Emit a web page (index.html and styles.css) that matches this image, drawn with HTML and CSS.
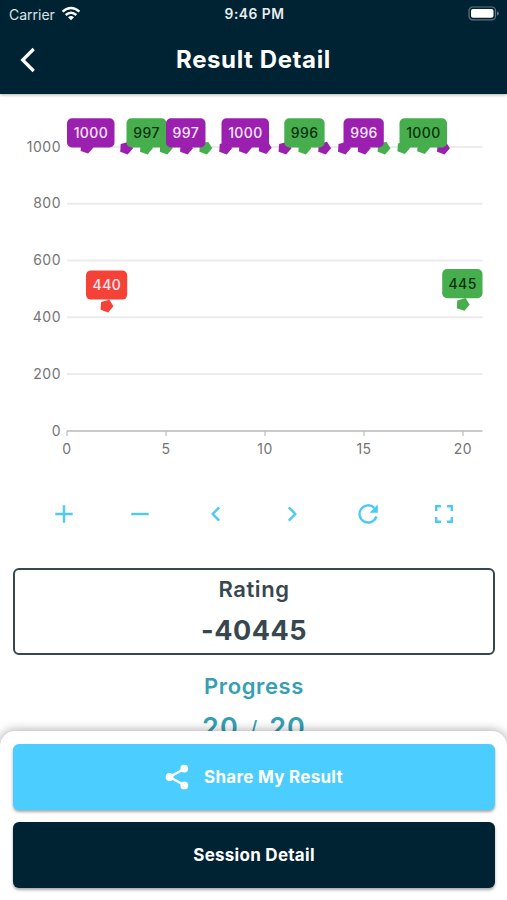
FILE: index.html
```html
<!DOCTYPE html>
<html lang="en">
<head>
<meta charset="utf-8">
<title>Result Detail</title>
<link rel="stylesheet" href="styles.css">
</head>
<body>
<div class="screen">
  <header class="top">
    <div class="status">
      <div class="carrier"><span>Carrier</span>
        <svg width="20" height="15" viewBox="0 0 20 15" fill="none" stroke="#fff" stroke-width="2.5"><path d="M1.6 5.6Q10-1.6 18.4 5.6M4.7 9Q10 4.6 15.3 9"/><path d="M7 11.2Q10 8.8 13 11.2L10 14.2Z" fill="#fff" stroke="none"/></svg>
      </div>
      <span class="time">9:46 PM</span>
      <svg class="battery" width="32" height="16" viewBox="0 0 32 16"><rect x="1" y="1" width="26.5" height="12.8" rx="3.6" fill="none" stroke="#61747e" stroke-width="1.2"/><rect x="3" y="3" width="22.5" height="8.8" rx="2" fill="#fff"/><path d="M29 5.2Q31 6 31 7.5T29 9.8Z" fill="#61747e"/></svg>
    </div>
    <div class="nav">
      <svg class="back" width="18" height="26" viewBox="0 0 18 26" fill="none" stroke="#fff" stroke-width="3.2"><path d="M14.7 2L3.7 13L14.7 24"/></svg>
      <h1>Result Detail</h1>
    </div>
  </header>
  <main class="content">
    <svg class="chart" width="507" height="376" viewBox="0 94 507 376">
      <defs>
        <path id="m" d="M6.7.3L1.3 6.4L-6.2 3.8L-5.7-4L2.6-6.3Z"/>
      </defs>
      <path class="grid" d="M67 147H482.5M67 203.7H482.5M67 260.5H482.5M67 317.3H482.5M67 374H482.5"/>
      <path class="axis" d="M67 431H482.5"/>
      <path class="tick" d="M67 431V436M166 431V436M265 431V436M364 431V436M463 431V436"/>
      <g class="label end">
        <text x="61" y="151.7">1000</text><text x="61" y="208.4">800</text><text x="61" y="265.2">600</text><text x="61" y="322">400</text><text x="61" y="378.7">200</text><text x="61" y="435.7">0</text>
      </g>
      <g class="label mid">
        <text x="67" y="454.3">0</text><text x="166" y="454.3">5</text><text x="265" y="454.3">10</text><text x="364" y="454.3">15</text><text x="463" y="454.3">20</text>
      </g>
      <g class="purple">
        <use href="#m" x="86.8" y="147.2"/><use href="#m" x="126.4" y="148"/><use href="#m" x="186.3" y="148"/><use href="#m" x="225.4" y="148"/><use href="#m" x="245.2" y="147.5"/><use href="#m" x="265" y="147.5"/><use href="#m" x="284.8" y="148"/><use href="#m" x="324.4" y="148"/><use href="#m" x="344.2" y="148"/><use href="#m" x="364" y="148"/><use href="#m" x="443.2" y="148"/>
      </g>
      <g class="green">
        <use href="#m" x="146.2" y="148"/><use href="#m" x="166" y="148"/><use href="#m" x="205.6" y="148"/><use href="#m" x="304.6" y="148"/><use href="#m" x="383.8" y="148"/><use href="#m" x="403.6" y="147.5"/><use href="#m" x="423.4" y="147.5"/><use href="#m" x="463" y="304.4"/>
      </g>
      <use class="red" href="#m" x="106.8" y="306"/>
      <g class="purple">
        <rect x="67" y="118.3" width="47.5" height="29.2" rx="5"/><rect x="221.5" y="118.3" width="47.5" height="29.2" rx="5"/><rect x="343.5" y="118.3" width="40.3" height="29.2" rx="5"/>
      </g>
      <g class="green">
        <rect x="126.5" y="118.3" width="40" height="29.2" rx="5"/><rect x="284.3" y="118.3" width="40.3" height="29.2" rx="5"/><rect x="399.5" y="118.3" width="47.5" height="29.2" rx="5"/><rect x="442.2" y="269" width="40.3" height="29.2" rx="5"/>
      </g>
      <rect class="purple" x="166" y="118.3" width="39.5" height="29.2" rx="5"/>
      <rect class="red" x="86" y="270.4" width="41.2" height="29.2" rx="5"/>
      <g class="value light mid">
        <text x="90.9" y="137.7">1000</text><text x="185.9" y="137.7">997</text><text x="245.4" y="137.7">1000</text><text x="364" y="137.7">996</text><text x="106.9" y="290">440</text>
      </g>
      <g class="value dark mid">
        <text x="146.5" y="137.7">997</text><text x="304.7" y="137.7">996</text><text x="423.4" y="137.7">1000</text><text x="462.6" y="288.5">445</text>
      </g>
    </svg>
    <div class="tools">
      <svg viewBox="0 0 24 24"><path d="M12 3.3V20.7M3.3 12H20.7"/></svg>
      <svg viewBox="0 0 24 24"><path d="M3.3 12H20.7"/></svg>
      <svg viewBox="0 0 24 24"><path d="M15.2 5.3L8.7 12L15.2 18.7"/></svg>
      <svg viewBox="0 0 24 24"><path d="M8.8 5.3L15.3 12L8.8 18.7"/></svg>
      <svg viewBox="0 0 24 24"><path d="M20.4 14.4A8.6 8.6 0 1 1 18.3 5.9"/><path class="solid" d="M21.8 2.4V10.7H13.5Z"/></svg>
      <svg viewBox="0 0 24 24"><path d="M4.2 9V4.2H9M15 4.2H19.8V9M19.8 15V19.8H15M9 19.8H4.2V15"/></svg>
    </div>
    <section class="card rating"><h2>Rating</h2><p>-40445</p></section>
    <section class="card progress"><h2>Progress</h2><p>20 <span>/</span> 20</p></section>
  </main>
  <footer class="sheet">
    <button class="btn share">
      <svg width="24" height="26" viewBox="0 0 24 26" fill="#fff"><path d="M20 4.5L4.5 13L20 21.5" fill="none" stroke="#fff" stroke-width="2.4"/><circle cx="19.3" cy="4.6" r="3.9"/><circle cx="4.6" cy="13" r="3.9"/><circle cx="19.3" cy="21.4" r="3.9"/></svg>
      <span>Share My Result</span>
    </button>
    <button class="btn session"><span>Session Detail</span></button>
  </footer>
</div>
</body>
</html>
```
FILE: styles.css
```css
* { box-sizing: border-box; }
body { margin: 0; font-family: Inter, "Liberation Sans", sans-serif; background: #fff; }
h1, h2, p { margin: 0; }
svg { display: block; flex: none; }

.screen { width: 507px; height: 900px; display: flex; flex-direction: column; overflow: hidden; }

.top { position: relative; flex: none; height: 94px; background: #002333; color: #fff; box-shadow: 0 1px 3px rgba(0, 0, 0, .3); }
.status { display: grid; grid-template-columns: 1fr auto 1fr; align-items: center; height: 28px; padding: 0 7px 0 9px; }
.carrier { display: flex; align-items: center; gap: 6px; font-size: 14px; letter-spacing: 0; color: #dce3e6; }
.carrier svg { margin-top: -2px; }
.time { font-size: 13.8px; font-weight: 600; letter-spacing: .5px; color: #e9eef0; }
.battery { justify-self: end; margin-top: -1px; }
.nav { display: grid; grid-template-columns: 1fr auto 1fr; align-items: center; height: 64px; padding: 0 18px; }
.back { margin-left: 1px; }
.nav h1 { font-size: 24px; line-height: 30px; font-weight: 700; letter-spacing: .6px; }

.content { flex: 1; min-height: 0; overflow: hidden; }
.chart { font-size: 14px; }
.grid { stroke: #ececec; stroke-width: 2; }
.axis { stroke: #cacaca; stroke-width: 2; }
.tick { stroke: #bdbdbd; stroke-width: 1.2; }
.label { fill: #757575; letter-spacing: .5px; }
.end { text-anchor: end; }
.mid { text-anchor: middle; }
.value { font-weight: 500; letter-spacing: .4px; }
.light { fill: #f8e8fa; }
.dark { fill: #0c300e; }
.purple { fill: #9c20b0; }
.green { fill: #46ae4d; }
.red { fill: #f44336; }

.tools { display: grid; grid-template-columns: repeat(6, 76px); justify-content: center; justify-items: center; align-items: center; height: 88px; }
.tools svg { width: 24px; height: 24px; fill: none; stroke: #4cc9fb; stroke-width: 2.4; }
.tools .solid { fill: #4cc9fb; stroke: none; }

.card { margin: 0 12px 0 13px; height: 87px; text-align: center; border: 2.5px solid transparent; border-radius: 6px; }
.card h2 { font-size: 22px; line-height: 28px; font-weight: 600; letter-spacing: .6px; padding-top: 5px; }
.card p { font-size: 27px; line-height: 34px; font-weight: 700; letter-spacing: .5px; padding-top: 11px; }
.rating { margin-top: 10px; border-color: #37474f; color: #37474f; }
.progress { margin-top: 10px; color: #369fb3; }
.card.progress p { font-weight: 600; letter-spacing: 1px; word-spacing: 3px; }
.progress span { font-weight: 400; font-size: 22px; }

.sheet { position: relative; flex: none; height: 169px; padding: 13px 12px 13px 13px; display: flex; flex-direction: column; gap: 12px; background: #fff; border-radius: 15px 15px 0 0; box-shadow: 0 0 11px rgba(0, 0, 0, .38); }
.btn { display: flex; align-items: center; justify-content: center; gap: 15px; height: 66px; flex: none; border: 0; border-radius: 6px; color: #fff; font: 700 17px/24px Inter, sans-serif; letter-spacing: .27px; box-shadow: 0 2px 3px rgba(0, 0, 0, .35); }
.share { background: #4ccdff; }
.session { background: #002333; }
```
